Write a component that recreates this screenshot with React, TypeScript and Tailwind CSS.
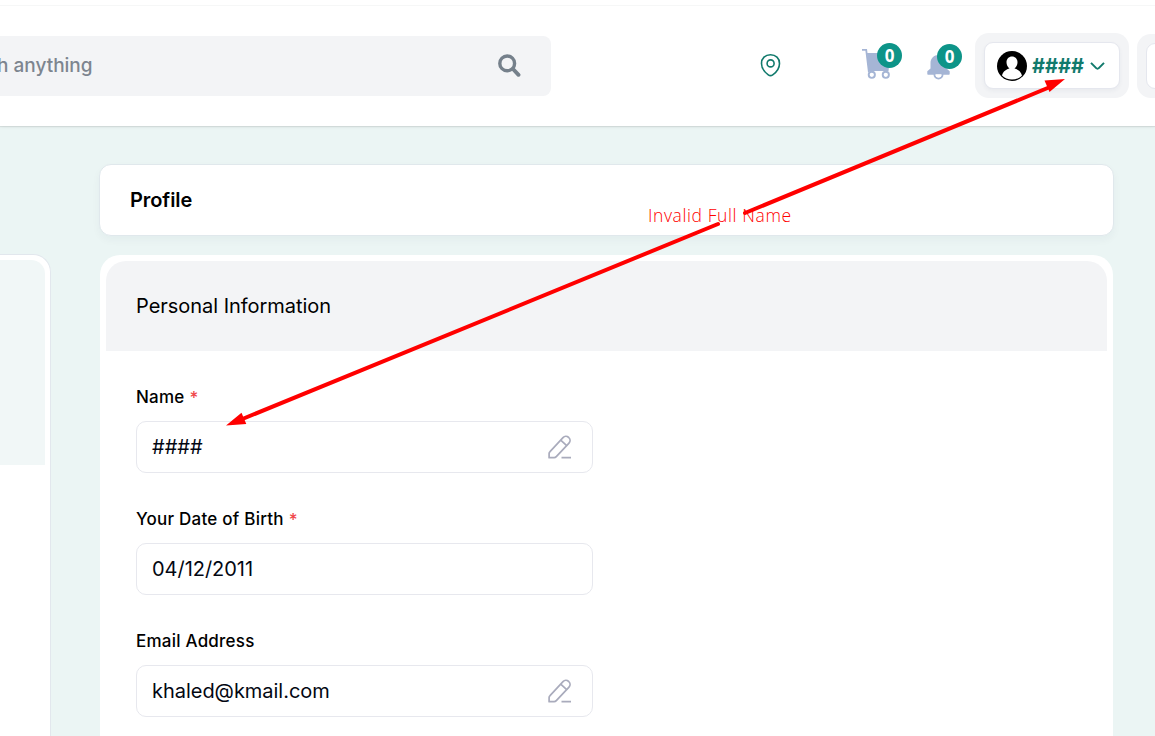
import React from "react";

function PencilIcon() {
  return (
    <svg className="-mt-px h-6 w-6" viewBox="0 0 24 24" fill="none" stroke="#a9abbc" strokeWidth="1.7" strokeLinejoin="round">
      <path d="M1.1 22.7v-4.1c0-.8.3-1.4.9-2L15 2.7c1.5-1.6 4-1.7 5.7-.2 1.7 1.6 1.8 4 .3 5.6L8.3 21.6c-.6.7-1.3 1.1-2.2 1.1Z" />
      <path d="m12.700 5.100 6 5.500M13.500 22.700H23" />
    </svg>
  );
}

function PinIcon() {
  return (
    <svg className="h-6 w-[21px]" viewBox="0 0 21 24" fill="none" stroke="#117a6c" strokeWidth="1.600">
      <path d="M10.500 1.800c5.300 0 9 3.400 9 8.600 0 5-3.800 9.300-6.800 11.500-1.400 1-3 1-4.400 0C5.300 19.700 1.500 15.400 1.500 10.400c0-5.200 3.700-8.600 9-8.600Z" />
      <circle cx="10.600" cy="10.400" r="3.500" />
    </svg>
  );
}

function CartIcon() {
  return (
    <svg className="h-[31px] w-7" viewBox="0 0 28 31">
      <path d="M0 1.800h4.200l2.700 22.400" fill="none" stroke="#a5b5d5" strokeWidth="1.800" />
      <path d="M4.800 5H27v13.500L26.500 23H7Z" fill="#a5b5d5" />
      <g fill="#fff" stroke="#a5b5d5" strokeWidth="1.900">
        <circle cx="9.800" cy="26.800" r="3.100" />
        <circle cx="23.800" cy="26.800" r="3.100" />
      </g>
    </svg>
  );
}

function BellIcon() {
  return (
    <svg className="h-[27px] w-[23px]" viewBox="0 0 23 27">
      <circle cx="11.500" cy="21.500" r="4" fill="#fff" stroke="#a5b5d5" strokeWidth="2" />
      <path d="M11.500 0v2c4.500 0 8 3.300 8 8v5.500l3.200 2.700v2.500c0 .6-.4 1-1 1H1.300c-.6 0-1-.4-1-1v-2.500l3.200-2.700V10c0-4.700 3.500-8 8-8Z" fill="#a5b5d5" />
      <path d="M8.500 21.200h6a3 3.200 0 0 1-6 0Z" fill="#fff" />
    </svg>
  );
}

function Badge({ className }: { className: string }) {
  return (
    <span className={`absolute flex h-[25px] w-[25px] items-center justify-center rounded-full bg-[#0d9488] pb-px font-['Open_Sans',sans-serif] text-[17px] leading-none font-bold text-white ${className}`}>
      0
    </span>
  );
}

function Avatar() {
  return (
    <svg className="h-[30px] w-[30px]" viewBox="0 0 30 30">
      <circle cx="15" cy="15" r="15" fill="#000" />
      <path d="M5 24.500c1-4.200 4.500-6.300 7.500-7C10.600 16 9.500 13.800 9.500 11.300 9.500 8 11.800 5.600 15 5.600s5.500 2.400 5.500 5.700c0 2.500-1.100 4.700-3 6.200 3 .7 6.500 2.800 7.500 7-2.600 2.700-6 4-10 4s-7.400-1.300-10-4Z" fill="#fff" />
    </svg>
  );
}

function Header() {
  return (
    <header className="h-[126px] w-full shrink-0 overflow-hidden bg-white pt-[5px]">
      <div className="h-px bg-[#f6f7f7]" />
      <div className="flex pt-[27px]">
        <div className="mt-[3px] flex h-[60px] w-[551px] shrink-0 items-center justify-between rounded-r-lg bg-[#f3f4f6] pr-[30px]">
          <span className="-ml-[3px] text-[19px] font-[450] whitespace-nowrap text-[#7d858f]">h anything</span>
          <svg className="-mt-0.5 h-[23px] w-[23px]" viewBox="0 0 23 23" fill="none" stroke="#75808b">
            <circle cx="9.200" cy="9.400" r="7.400" strokeWidth="3.400" />
            <path d="m15 15 5.500 5.800" strokeWidth="3.900" strokeLinecap="round" />
          </svg>
        </div>
        <div className="mt-5 ml-[209px]"><PinIcon /></div>
        <div className="relative mt-[15px] ml-[81px]">
          <CartIcon />
          <Badge className="top-[-5px] left-[15px]" />
        </div>
        <div className="relative mt-5 ml-[37px]">
          <BellIcon />
          <Badge className="top-[-9px] left-[10px]" />
        </div>
        <div className="ml-[25px] h-[65px] w-[154px] shrink-0 rounded-[14px] bg-[#f3f4f6] px-[9px] pt-[9px]">
          <div className="flex h-[47px] items-center rounded-[9px] border border-[#e5e7ee] bg-white pl-3 shadow-[0_2px_4px_rgba(40,50,90,0.05)]">
            <Avatar />
            <span className="ml-[5px] w-[54px] text-[20px] font-bold text-[#117a6c]">####</span>
            <svg className="ml-1 h-2 w-[15px]" viewBox="0 0 15 8" fill="none" stroke="#117a6c" strokeWidth="2">
              <path d="m1 .9 5.200 5.200c.7.700 1.900.7 2.600 0L14 .9" />
            </svg>
          </div>
        </div>
        <div className="mt-px ml-2 h-16 w-[80px] shrink-0 rounded-[14px] bg-[#f3f4f6] px-[9px] pt-[9px]">
          <div className="h-[46px] rounded-[9px] border border-[#e5e7ee] bg-white" />
        </div>
      </div>
    </header>
  );
}

function Field({ label, value, required, editable }: { label: string; value: string; required?: boolean; editable?: boolean }) {
  return (
    <div className="h-[122px] w-[457px]">
      <div className="flex h-[35px] items-start text-[17px] leading-[22px] font-medium tracking-[0.230px] text-black">
        {label}
        {required && <span className="mt-px ml-[5px] text-[#f0474b]">*</span>}
      </div>
      <div className="flex h-[52px] items-center justify-between rounded-[10px] border border-[#e7e8ee] bg-white pr-5 pl-[15px] text-[20px] tracking-[-0.030px] text-[#030712]">
        <span>{value}</span>
        {editable && <PencilIcon />}
      </div>
    </div>
  );
}

export default function App() {
  return (
    <div className="relative flex h-[736px] w-[1155px] flex-col overflow-hidden bg-[#ebf5f4] font-[Inter,sans-serif]">
      <div className="z-10 shadow-[0_1px_1px_rgba(0,0,0,0.08),0_1px_4px_rgba(0,0,0,0.06)]"><Header /></div>
      <main className="flex flex-1">
        <aside className="mt-32 mr-[49px] h-[500px] w-[51px] shrink-0 rounded-tr-[18px] border-t border-r border-[#e2e7ed] bg-white pt-[5px] pr-[5px]">
          <div className="h-[205px] rounded-tr-[14px] bg-[#f1f7f7]" />
        </aside>
        <div className="-ml-px flex w-[1015px] shrink-0 flex-col pt-[38px]">
          <section className="flex h-[72px] shrink-0 items-center rounded-[12px] border border-[#e0e8ec] bg-white pl-[30px] shadow-[0_4px_8px_rgba(30,60,80,0.04)]">
            <h1 className="text-[20px] font-semibold tracking-[-0.080px] text-black">Profile</h1>
          </section>
          <section className="mt-[19px] mr-px ml-px h-[500px] rounded-t-[20px] bg-white p-[6px]">
            <div className="flex h-[90px] items-center rounded-t-[20px] bg-[#f3f4f6] pl-[30px]">
              <h2 className="text-[20px] tracking-[-0.030px] text-black">Personal Information</h2>
            </div>
            <div className="pt-[35px] pl-[30px]">
              <Field label="Name" value="####" required editable />
              <Field label="Your Date of Birth" value="04/12/2011" required />
              <Field label="Email Address" value="khaled@kmail.com" editable />
            </div>
          </section>
        </div>
      </main>
      <span className="absolute top-[203px] left-[648px] z-20 font-['Open_Sans',sans-serif] text-[17.500px] leading-6 font-[350] tracking-[0.600px] whitespace-nowrap text-[#ff0000]">Invalid Full Name</span>
      <svg className="absolute inset-0 z-20 h-full w-full" viewBox="0 0 1155 736" fill="#ff0000" stroke="#ff0000">
        <path d="m745 213 305-126M718 224 240 420" strokeWidth="4" strokeLinecap="round" fill="none" />
        <path d="M1065 79 1049.500 92 1044.500 80.500ZM226 425.500l15.500-12.800 4.800 11.300Z" stroke="none" />
      </svg>
    </div>
  );
}
